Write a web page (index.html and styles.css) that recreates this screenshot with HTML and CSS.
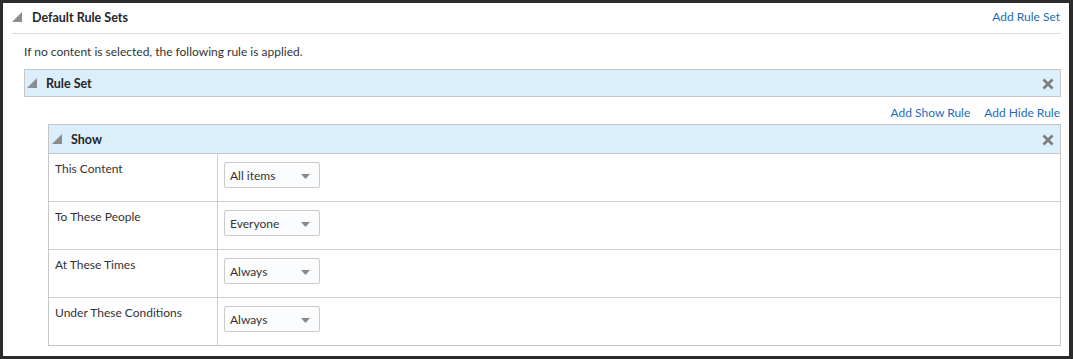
FILE: index.html
```html
<!DOCTYPE html>
<html>
<head>
<meta charset="utf-8">
<link rel="stylesheet" href="styles.css">
</head>
<body>
<div class="frame">
  <div class="section">
    <div class="section-head">
      <div class="title">
        <svg class="tri" width="10" height="10" viewBox="0 0 10 10"><polygon points="0,10 10,0 10,10" fill="#8c8c8c"/></svg>
        <span>Default Rule Sets</span>
      </div>
      <a class="link head-link">Add Rule Set</a>
    </div>
    <div class="section-body">
      <p class="desc">If no content is selected, the following rule is applied.</p>
      <div class="ruleset">
        <div class="bar">
          <div class="title">
            <svg class="tri" width="10" height="10" viewBox="0 0 10 10"><polygon points="0,10 10,0 10,10" fill="#8c8c8c"/></svg>
            <span>Rule Set</span>
          </div>
          <svg class="close" width="12" height="12" viewBox="0 0 12 12"><path d="M1.5 1.5 L10.5 10.5 M10.5 1.5 L1.5 10.5" stroke="#7b7b7b" stroke-width="2.6"/></svg>
        </div>
        <div class="ruleset-body">
          <div class="actions">
            <a class="link">Add Show Rule</a>
            <a class="link">Add Hide Rule</a>
          </div>
          <div class="rule">
            <div class="bar bar-show">
              <div class="title">
                <svg class="tri" width="10" height="10" viewBox="0 0 10 10"><polygon points="0,10 10,0 10,10" fill="#8c8c8c"/></svg>
                <span>Show</span>
              </div>
              <svg class="close" width="12" height="12" viewBox="0 0 12 12"><path d="M1.5 1.5 L10.5 10.5 M10.5 1.5 L1.5 10.5" stroke="#7b7b7b" stroke-width="2.6"/></svg>
            </div>
            <div class="grid">
              <div class="label">This Content</div>
              <div class="value"><div class="select"><span>All items</span><svg width="9" height="5" viewBox="0 0 9 5"><polygon points="0,0 9,0 4.5,5" fill="#888"/></svg></div></div>
              <div class="label">To These People</div>
              <div class="value"><div class="select"><span>Everyone</span><svg width="9" height="5" viewBox="0 0 9 5"><polygon points="0,0 9,0 4.5,5" fill="#888"/></svg></div></div>
              <div class="label">At These Times</div>
              <div class="value"><div class="select"><span>Always</span><svg width="9" height="5" viewBox="0 0 9 5"><polygon points="0,0 9,0 4.5,5" fill="#888"/></svg></div></div>
              <div class="label">Under These Conditions</div>
              <div class="value"><div class="select"><span>Always</span><svg width="9" height="5" viewBox="0 0 9 5"><polygon points="0,0 9,0 4.5,5" fill="#888"/></svg></div></div>
            </div>
          </div>
        </div>
      </div>
    </div>
  </div>
</div>
</body>
</html>
```

FILE: styles.css
```css
html, body {
  margin: 0;
  padding: 0;
}
body {
  background: #2b2b2b;
  font-family: "Segoe UI", Lato, "Open Sans", sans-serif;
  font-size: 12px;
  color: #333;
}
.frame {
  margin: 3px 4px 3px 3px;
  height: 353px;
  background: #fff;
  box-sizing: border-box;
  padding: 0 8px 0 9px;
}
.section-head {
  height: 29px;
  border-bottom: 1px solid #dcdcdc;
  display: flex;
  align-items: center;
  justify-content: space-between;
  padding-top: 0;
  padding-bottom: 1px;
}
.head-link {
  margin-bottom: 2px;
  margin-right: 1px;
}
.title {
  display: flex;
  align-items: center;
  font-weight: bold;
  font-size: 12.5px;
  color: #262626;
}
.tri {
  margin-right: 10px;
  margin-bottom: 2px;
}
.bar .tri {
  margin-right: 9px;
}
.link {
  color: #1d6bb8;
  cursor: pointer;
  font-size: 12px;
}
.section-body {
  padding-left: 12px;
}
.desc {
  margin: 0;
  height: 35px;
  line-height: 35px;
}
.bar {
  height: 25px;
  background: #dbeefc;
  border: 1px solid #c6c6c6;
  display: flex;
  align-items: center;
  justify-content: space-between;
  padding: 1px 6px 0 2px;
}
.close {
  display: block;
}
.ruleset-body {
  padding-left: 24px;
}
.actions {
  height: 23px;
  display: flex;
  justify-content: flex-end;
  align-items: flex-end;
  gap: 14px;
  padding-bottom: 4px;
  padding-right: 1px;
}
.bar-show {
  height: 27px;
  border-bottom: 1px solid #c6c6c6;
}
.rule {
  border-left: 1px solid #c6c6c6;
  border-right: 1px solid #c6c6c6;
  border-bottom: 1px solid #c6c6c6;
}
.rule .bar-show {
  border-left: 0;
  border-right: 0;
  padding-left: 3px;
}
.grid {
  display: grid;
  grid-template-columns: 169px 1fr;
}
.label {
  border-bottom: 1px solid #cfcfcf;
  border-right: 1px solid #cfcfcf;
  padding: 7px 0 0 6px;
  height: 40px;
}
.value {
  border-bottom: 1px solid #cfcfcf;
  padding: 7px 0 0 6px;
  height: 40px;
}
.grid > :nth-last-child(-n+2) {
  border-bottom: 0;
}
.select {
  border: 1px solid #cbcbcb;
  border-radius: 2px;
  background: #fbfcfe;
  display: flex;
  align-items: center;
  justify-content: space-between;
  padding: 0 9px 0 5px;
  box-sizing: border-box;
  width: 96px;
  height: 26px;
  margin-top: 1px;
}
.select svg {
  margin-top: 2px;
}
```
